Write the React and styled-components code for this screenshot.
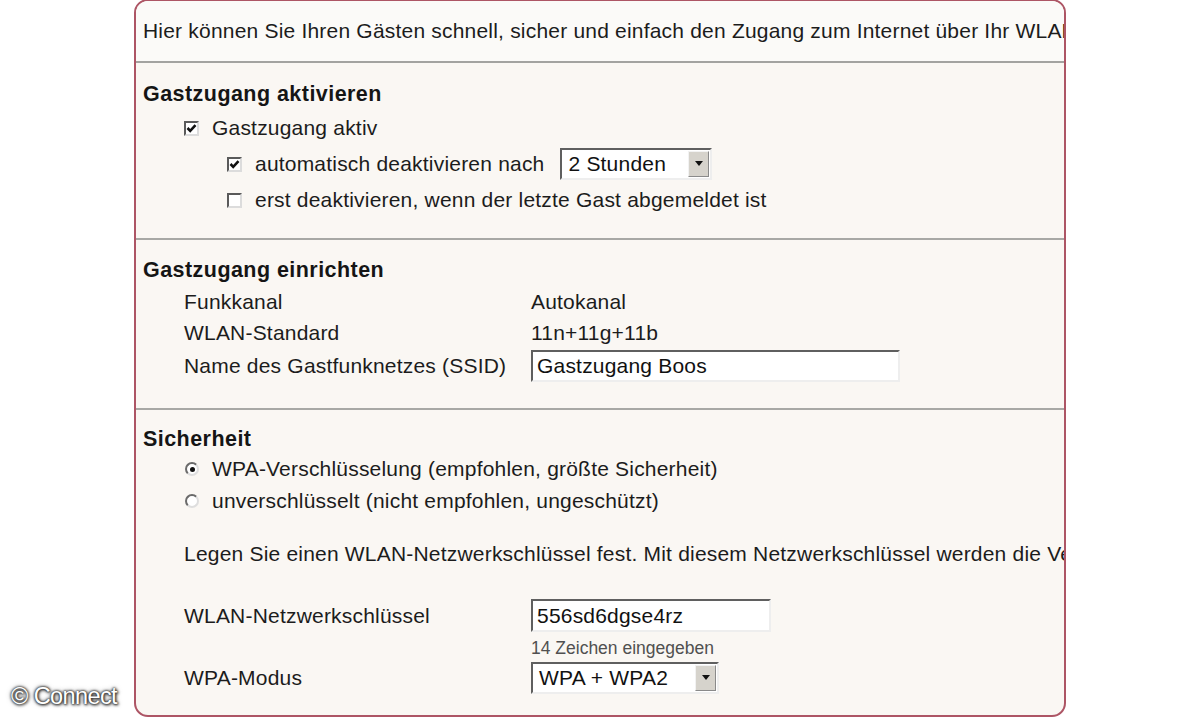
import styled, { createGlobalStyle } from "styled-components";

const Global = createGlobalStyle`
  html, body {
    margin: 0;
    padding: 0;
    background: #ffffff;
  }
  body {
    font-family: "Liberation Sans", Arial, sans-serif;
    color: #1c1c1c;
  }
`

const Page = styled.div`
  position: relative;
  width: 1200px;
  height: 720px;
  overflow: hidden;
  display: flex;
  padding-left: 134px;
  box-sizing: border-box;
`

const Card = styled.div`
  width: 932px;
  height: 718px;
  margin-top: -1px;
  box-sizing: border-box;
  border: 2px solid #ad5565;
  border-radius: 14px;
  background: #faf7f3;
  overflow: hidden;
  white-space: nowrap;
  font-size: 21px;
  letter-spacing: 0.2px;
`

const Intro = styled.div`
  height: 60px;
  display: flex;
  align-items: center;
  padding-left: 7px;
  background: #fbfaf8;
  border-bottom: 2px solid #a3a3a0;
`

const Section = styled.div`
  padding: ${p => p.$pad || "17px 0 20px 7px"};
  border-bottom: ${p => (p.$last ? "none" : "2px solid #a8a8a5")};
`

const Heading = styled.div`
  height: 28px;
  line-height: 28px;
  font-weight: bold;
  font-size: 21.5px;
  letter-spacing: 0.45px;
  color: #151515;
`

const Row = styled.div`
  display: flex;
  align-items: center;
  height: ${p => p.$h || 36}px;
  margin-top: ${p => p.$mt || 0}px;
  padding-left: ${p => p.$indent || 41}px;
`

const FieldRow = styled.div`
  display: grid;
  grid-template-columns: 347px auto;
  align-items: center;
  height: ${p => p.$h || 31}px;
  margin-top: ${p => p.$mt || 0}px;
  padding-left: 41px;
`

const Box = styled.span`
  width: 15px;
  height: 15px;
  box-sizing: border-box;
  border: 2px solid;
  border-color: #5a5a5a #dcdcdc #dcdcdc #5a5a5a;
  background: #ffffff;
  display: inline-flex;
  align-items: center;
  justify-content: center;
  margin-right: 13px;
  flex-shrink: 0;
`

const Radio = styled.span`
  width: 14px;
  height: 14px;
  box-sizing: border-box;
  border-radius: 50%;
  border: 2px solid;
  border-color: #6a6a6a #dedede #dedede #6a6a6a;
  background: #ffffff;
  display: inline-flex;
  align-items: center;
  justify-content: center;
  margin: 0 13px 0 1px;
  flex-shrink: 0;
  &::after {
    content: "";
    width: 5px;
    height: 5px;
    border-radius: 50%;
    background: ${p => (p.$on ? "#111" : "transparent")};
  }
`

const TextBox = styled.div`
  width: ${p => p.$w}px;
  height: ${p => p.$hh || 32}px;
  box-sizing: border-box;
  border: 2px solid;
  border-color: #5f5f5f #eeeeee #eeeeee #5f5f5f;
  background: #ffffff;
  display: flex;
  align-items: center;
  padding-left: 4px;
  font-size: 21px;
  color: #111;
`

const Select = styled.div`
  width: ${p => p.$w}px;
  height: 32px;
  box-sizing: border-box;
  border: 2px solid;
  border-color: #5f5f5f #eeeeee #eeeeee #5f5f5f;
  background: #ffffff;
  display: flex;
  align-items: center;
  justify-content: space-between;
  padding-left: 6px;
  margin-left: ${p => p.$ml || 0}px;
  font-size: 21px;
  color: #111;
`

const Arrow = styled.span`
  width: 21px;
  height: 26px;
  margin-right: 1px;
  box-sizing: border-box;
  background: #d6d3cc;
  border: 1px solid;
  border-color: #f2f2f2 #8a8a8a #8a8a8a #f2f2f2;
  display: flex;
  align-items: center;
  justify-content: center;
`

const Hint = styled.div`
  height: 24px;
  margin-top: 3px;
  padding-left: 388px;
  font-size: 17.5px;
  letter-spacing: 0;
  color: #505050;
  display: flex;
  align-items: center;
`

const Watermark = styled.div`
  position: absolute;
  left: 11px;
  top: 683px;
  font-size: 23.5px;
  color: #ffffff;
  letter-spacing: -0.6px;
  text-shadow: 0 0 2px #222, 0 0 3px #444, 1px 1px 3px #333, 0 0 5px #777;
`

const Check = ({ on }) => (
  <Box>
    {on && (
      <svg width="11" height="11" viewBox="0 0 11 11">
        <path d="M1.5 5 L4.2 7.8 L9.5 2.2" fill="none" stroke="#111" strokeWidth="2.6" />
      </svg>
    )}
  </Box>
)

const DropDown = ({ w, ml, children }) => (
  <Select $w={w} $ml={ml}>
    {children}
    <Arrow>
      <svg width="10" height="6" viewBox="0 0 10 6">
        <path d="M1 0 H9 L5 5 Z" fill="#111" />
      </svg>
    </Arrow>
  </Select>
)

const App = () => {
  return (
    <Page>
      <Global />
      <Card>
        <Intro>
          Hier können Sie Ihren Gästen schnell, sicher und einfach den Zugang zum Internet über Ihr WLAN ermöglichen.
        </Intro>

        <Section>
          <Heading>Gastzugang aktivieren</Heading>
          <Row $mt={2}>
            <Check on />
            Gastzugang aktiv
          </Row>
          <Row $indent={84}>
            <Check on />
            automatisch deaktivieren nach
            <DropDown w={152} ml={16}>2 Stunden</DropDown>
          </Row>
          <Row $indent={84}>
            <Check />
            erst deaktivieren, wenn der letzte Gast abgemeldet ist
          </Row>
        </Section>

        <Section $pad="16px 0 24px 7px">
          <Heading>Gastzugang einrichten</Heading>
          <FieldRow $mt={2}>
            <span>Funkkanal</span>
            <span>Autokanal</span>
          </FieldRow>
          <FieldRow>
            <span>WLAN-Standard</span>
            <span>11n+11g+11b</span>
          </FieldRow>
          <FieldRow $h={36}>
            <span>Name des Gastfunknetzes (SSID)</span>
            <TextBox $w={369}>Gastzugang Boos</TextBox>
          </FieldRow>
        </Section>

        <Section $pad="15px 0 0 7px" $last>
          <Heading>Sicherheit</Heading>
          <Row $h={32}>
            <Radio $on />
            WPA-Verschlüsselung (empfohlen, größte Sicherheit)
          </Row>
          <Row $h={32}>
            <Radio />
            unverschlüsselt (nicht empfohlen, ungeschützt)
          </Row>
          <Row $h={32} $mt={21}>
            Legen Sie einen WLAN-Netzwerkschlüssel fest. Mit diesem Netzwerkschlüssel werden die Verbindungen verschlüsselt.
          </Row>
          <FieldRow $h={35} $mt={28}>
            <span>WLAN-Netzwerkschlüssel</span>
            <TextBox $w={240} $hh={33}>556sd6dgse4rz</TextBox>
          </FieldRow>
          <Hint>14 Zeichen eingegeben</Hint>
          <FieldRow $h={36}>
            <span>WPA-Modus</span>
            <DropDown w={188}>WPA + WPA2</DropDown>
          </FieldRow>
        </Section>
      </Card>
      <Watermark>© Connect</Watermark>
    </Page>
  );
};

export default App;
